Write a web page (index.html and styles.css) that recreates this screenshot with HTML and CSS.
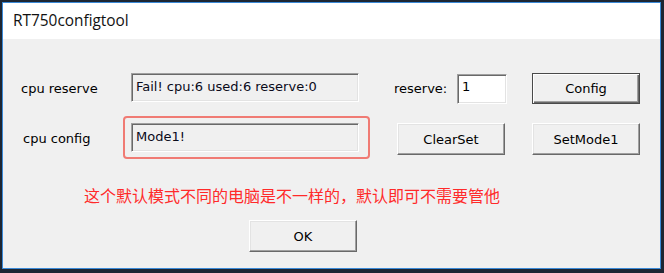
FILE: index.html
```html
<!DOCTYPE html>
<html lang="zh">
<head>
<meta charset="utf-8">
<title>RT750configtool</title>
<link rel="stylesheet" href="styles.css">
</head>
<body>
<div class="window">
  <div class="titlebar">RT750configtool</div>
  <div class="client">
    <div class="row row1">
      <div class="label lbl1">cpu reserve</div>
      <div class="field">Fail! cpu:6 used:6 reserve:0</div>
      <div class="label lbl-reserve">reserve:</div>
      <div class="input">1</div>
      <div class="btn btn-default">Config</div>
    </div>
    <div class="row row2">
      <div class="label lbl2">cpu config</div>
      <div class="highlight">
        <div class="field">Mode1!</div>
      </div>
      <div class="btn btn-clear">ClearSet</div>
      <div class="btn btn-mode">SetMode1</div>
    </div>
    <div class="note">这个默认模式不同的电脑是不一样的，默认即可不需要管他</div>
    <div class="row row3">
      <div class="btn btn-ok">OK</div>
    </div>
  </div>
</div>
</body>
</html>
```

FILE: styles.css
```css
html, body {
  margin: 0;
  padding: 0;
}
body {
  width: 664px;
  height: 273px;
  background: #1d2633;
  overflow: hidden;
  font-family: "DejaVu Sans", Verdana, sans-serif;
  color: #000;
}
.window {
  margin: 2px 0 0 2px;
  width: 657px;
  height: 265px;
  border: 1px solid #3b8ad8;
  background: #f0f0f0;
  display: flex;
  flex-direction: column;
}
.titlebar {
  height: 36px;
  background: #ffffff;
  font-family: "Open Sans", "Noto Sans", sans-serif;
  font-size: 15.4px;
  line-height: 36px;
  padding-left: 10px;
  color: #111;
}
.client {
  flex: 1;
  display: flex;
  flex-direction: column;
  padding: 0 0 0 18px;
}
.row {
  display: flex;
  align-items: center;
}
.row1 {
  margin-top: 33px;
  height: 33px;
}
.row2 {
  margin-top: 11px;
  height: 43px;
}
.label {
  font-size: 13px;
}
.lbl1 {
  width: 110px;
  flex: none;
}
.lbl2 {
  width: 102px;
  padding-left: 2px;
  box-sizing: border-box;
  flex: none;
  margin-top: 1px;
}
.field {
  box-sizing: border-box;
  width: 228px;
  height: 29px;
  flex: none;
  background: #f0f0f0;
  border-top: 1px solid #a0a0a0;
  border-left: 1px solid #a0a0a0;
  border-right: 1px solid #ffffff;
  border-bottom: 1px solid #ffffff;
  box-shadow: inset 1px 1px 0 #696969, inset -1px -1px 0 #e3e3e3;
  font-size: 13px;
  padding: 5px 0 0 4px;
  line-height: 16px;
  white-space: nowrap;
  color: #0a0a1a;
}
.row1 .field {
  margin-top: -3px;
}
.lbl-reserve {
  width: 63px;
  margin-left: 35px;
  flex: none;
}
.input {
  box-sizing: border-box;
  width: 50px;
  height: 30px;
  flex: none;
  background: #ffffff;
  border-top: 1px solid #a0a0a0;
  border-left: 1px solid #a0a0a0;
  border-right: 1px solid #ffffff;
  border-bottom: 1px solid #ffffff;
  box-shadow: inset 1px 1px 0 #696969, inset -1px -1px 0 #e3e3e3;
  font-size: 13px;
  line-height: 16px;
  padding: 4px 0 0 4px;
}
.btn {
  box-sizing: border-box;
  width: 108px;
  height: 32px;
  flex: none;
  background: #f0f0f0;
  border-top: 1px solid #ffffff;
  border-left: 1px solid #ffffff;
  border-right: 1px solid #696969;
  border-bottom: 1px solid #696969;
  box-shadow: inset -1px -1px 0 #a0a0a0, inset 1px 1px 0 #e3e3e3;
  font-size: 13px;
  display: flex;
  align-items: center;
  justify-content: center;
}
.btn-default {
  margin-left: 25px;
  height: 31px;
  border: 1px solid #4a4a4a;
  box-shadow: inset 1px 1px 0 #ffffff, inset -1px -1px 0 #696969, inset -2px -2px 0 #a0a0a0;
}
.highlight {
  box-sizing: border-box;
  width: 247px;
  height: 43px;
  flex: none;
  border: 2px solid #f07b74;
  border-radius: 4px;
  padding: 5px 0 0 6px;
}
.btn-clear {
  margin-left: 27px;
  margin-top: 3px;
}
.btn-mode {
  margin-left: 27px;
  margin-top: 3px;
}
.note {
  margin-top: 26px;
  margin-left: 63px;
  font-family: "Noto Sans CJK SC", sans-serif;
  font-size: 16px;
  line-height: 20px;
  color: #ff2a2a;
}
.row3 {
  margin-top: 15px;
}
.btn-ok {
  margin-left: 228px;
}
```
